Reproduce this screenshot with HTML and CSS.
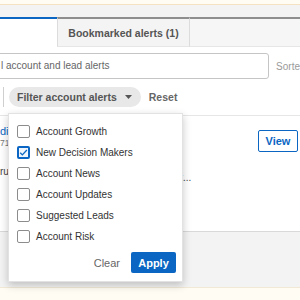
FILE: index.html
```html
<!DOCTYPE html>
<html lang="en">
<head>
    <meta charset="UTF-8">
    <title>Account alerts</title>
    <link rel="stylesheet" href="styles.css">
</head>
<body>
    <div class="notice"></div>
    <div class="shell">
        <div class="tabs">
            <div class="tab tab-active"></div>
            <div class="tab">Bookmarked alerts (1)</div>
            <div class="tab-rest"></div>
        </div>
        <div class="panel">
            <div class="search-row">
                <div class="search">l account and lead alerts</div>
                <span class="sort">Sorte</span>
            </div>
            <div class="filter-row">
                <span class="divider"></span>
                <button class="pill">Filter account alerts
                    <svg class="caret" width="7" height="4" viewBox="0 0 7 4"><path d="M0 0h7L3.5 4z" fill="#555"/></svg>
                </button>
                <button class="reset">Reset</button>
            </div>
            <div class="card">
                <div class="card-main">
                    <a class="name">dia</a>
                    <div class="meta">712</div>
                    <p class="snippet">ru</p>
                </div>
                <p class="more">’t...</p>
                <button class="view">View</button>
            </div>

            <div class="dropdown">
                <ul class="options">
                    <li><span class="box"></span>Account Growth</li>
                    <li><span class="box checked"><svg width="11" height="11" viewBox="0 0 11 11"><path d="M1.5 5.8l2.6 2.6L9.6 2.4" fill="none" stroke="#0a66c2" stroke-width="1.6"/></svg></span>New Decision Makers</li>
                    <li><span class="box"></span>Account News</li>
                    <li><span class="box"></span>Account Updates</li>
                    <li><span class="box"></span>Suggested Leads</li>
                    <li><span class="box"></span>Account Risk</li>
                </ul>
                <div class="actions">
                    <button class="clear">Clear</button>
                    <button class="apply">Apply</button>
                </div>
            </div>
        </div>
        <div class="spacer"></div>
    </div>
    <div class="notice notice-bottom"></div>
</body>
</html>
```

FILE: styles.css
```css
body { margin: 0; width: 300px; height: 300px; overflow: hidden; background-color: #f3f3f3; font-family: "Liberation Sans", Arial, sans-serif; color: #333; }
button { font-family: inherit; cursor: pointer; }

.notice { height: 4px; background-color: #fffcf3; border-bottom: 1px solid #f5e2c2; }
.notice-bottom { height: 12px; border-bottom: none; border-top: 1px solid #f1e8d6; }
.shell { padding-top: 12px; }

.tabs { display: flex; height: 30px; }
.tab { box-sizing: border-box; display: flex; align-items: center; justify-content: center; width: 133px; background-color: #f4f4f4; border-top: 2px solid #8e8e8e; border-left: 1px solid #dcdcdc; border-right: 1px solid #dcdcdc; border-bottom: 1px solid #e6e6e6; font-size: 10.5px; font-weight: bold; color: #555; }
.tab-active { width: 57px; background-color: #fff; border: none; border-top: 2px solid #0a66c2; }
.tab-rest { flex: 1; background-color: #f6f6f6; border-top: 2px solid #8e8e8e; border-bottom: 1px solid #e6e6e6; }

.panel { position: relative; background-color: #fff; }
.search-row { display: flex; align-items: center; padding-top: 6px; }
.search { box-sizing: border-box; width: 274px; height: 26px; margin-left: -4px; padding-left: 4px; border: 1px solid #c5c5c5; border-radius: 3px; font-size: 10px; line-height: 24px; color: #666; }
.sort { margin-left: 7px; font-size: 10px; color: #9a9a9a; }

.filter-row { display: flex; align-items: center; padding: 8px 0; }
.divider { width: 1px; height: 20px; margin-left: 3px; background-color: #cfcfcf; }
.pill { display: flex; align-items: center; height: 20px; margin-left: 5px; padding: 0 9px 0 8px; border: none; border-radius: 10px; background-color: #e8e8e8; font-size: 10.5px; font-weight: bold; color: #555; }
.caret { margin-left: 8px; }
.reset { margin-left: 4px; padding: 0 4px; border: none; background: none; font-size: 10.5px; font-weight: bold; color: #666; }

.card { display: flex; height: 115px; border-top: 1px solid #e6e6e6; border-bottom: 1px solid #d9d9d9; }
.card-main { width: 178px; }
.name { display: block; margin-top: 9px; font-size: 11px; line-height: 13px; color: #0a66c2; }
.meta { font-size: 8.5px; line-height: 11px; color: #777; }
.snippet { margin: 17px 0 0; font-size: 10px; line-height: 12px; color: #444; }
.more { flex: 1; margin: 56px 0 0; font-size: 10px; line-height: 12px; color: #444; }
.view { align-self: flex-start; width: 40px; height: 22px; margin: 14px 2px 0 0; padding: 0; border: 1px solid #0a66c2; border-radius: 2px; background-color: #fff; font-size: 11px; font-weight: bold; color: #0a66c2; }

.dropdown { position: absolute; left: 8px; top: 66px; box-sizing: border-box; width: 175px; background-color: #fff; border: 1px solid #e2e2e2; box-shadow: 0 3px 8px rgba(0, 0, 0, 0.22); padding: 7px 6px 8px 8px; }
.options { list-style: none; margin: 0; padding: 0; }
.options li { display: flex; align-items: center; height: 21px; font-size: 10px; color: #333; }
.box { box-sizing: border-box; display: flex; align-items: center; justify-content: center; width: 13px; height: 13px; margin-right: 6px; border: 1px solid #8c8c8c; border-radius: 2px; background-color: #fff; }
.box.checked { border: 2px solid #0a66c2; background-color: #eef5fc; }
.actions { display: flex; justify-content: flex-end; align-items: center; margin-top: 5px; }
.clear { padding: 0; margin-right: 11px; border: none; background: none; font-size: 11px; color: #666; }
.apply { width: 45px; height: 21px; padding: 0; border: none; border-radius: 2px; background-color: #0a66c2; font-size: 11px; font-weight: bold; color: #fff; }

.spacer { height: 55px; }
```
